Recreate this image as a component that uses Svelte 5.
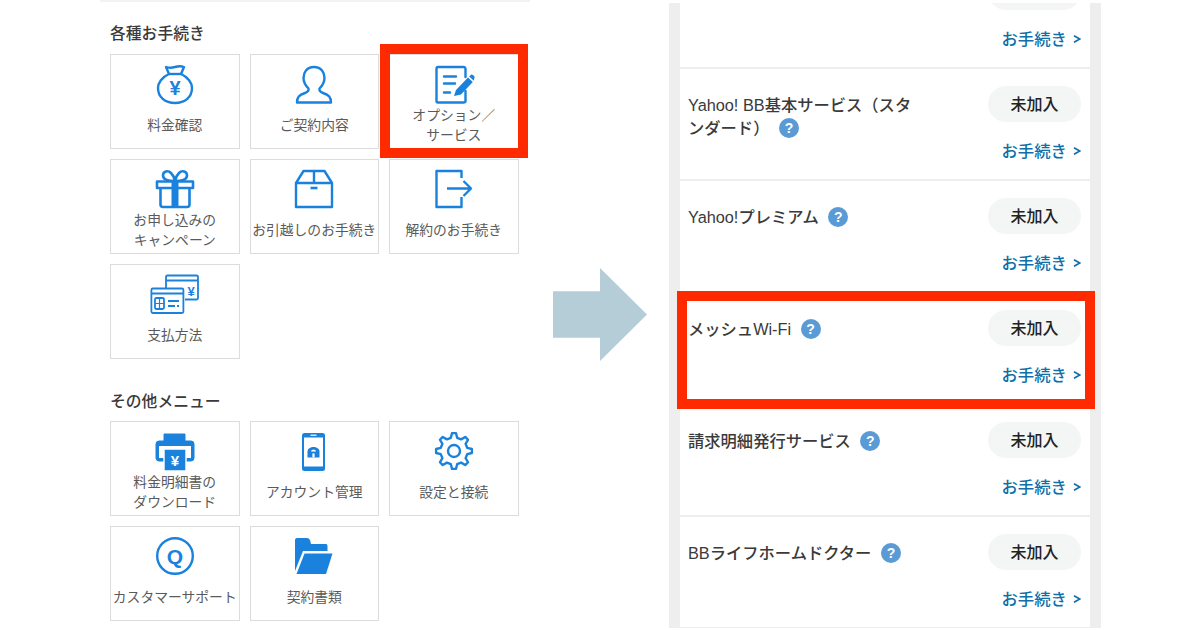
<script>
  const procedures = [
    { icon: 'bag', label: ['料金確認'] },
    { icon: 'user', label: ['ご契約内容'] },
    { icon: 'doc', label: ['オプション／', 'サービス'], marked: true },
    { icon: 'gift', label: ['お申し込みの', 'キャンペーン'] },
    { icon: 'box', label: ['お引越しのお手続き'] },
    { icon: 'exit', label: ['解約のお手続き'] },
    { icon: 'cards', label: ['支払方法'] }
  ]
  const others = [
    { icon: 'printer', label: ['料金明細書の', 'ダウンロード'] },
    { icon: 'phone', label: ['アカウント管理'] },
    { icon: 'gear', label: ['設定と接続'] },
    { icon: 'q', label: ['カスタマーサポート'] },
    { icon: 'folder', label: ['契約書類'] }
  ]
  const services = [
    { name: '' },
    { name: 'Yahoo! BB基本サービス（スタンダード）' },
    { name: 'Yahoo!プレミアム' },
    { name: 'メッシュWi-Fi', marked: true },
    { name: '請求明細発行サービス' },
    { name: 'BBライフホームドクター' }
  ]

  function gearPath() {
    const teeth = 8
    const pts = []
    for (let i = 0; i < teeth; i++) {
      const a = (i / teeth) * Math.PI * 2 - Math.PI / 2
      const step = (Math.PI * 2) / teeth
      const add = (r, o) => pts.push(`${(20 + r * Math.cos(a + o * step)).toFixed(2)} ${(20 + r * Math.sin(a + o * step)).toFixed(2)}`)
      add(13.6, -0.3)
      add(18, -0.14)
      add(18, 0.14)
      add(13.6, 0.3)
    }
    return 'M' + pts.join('L') + 'Z'
  }
</script>

{#snippet icon(name)}
  {#if name === 'bag'}
    <svg class="ico" viewBox="0 0 40 40" fill="none" stroke="currentColor" stroke-width="2.4" stroke-linejoin="round">
      <path d="M14 10 L11 3 Q15 4.5 20 3 Q25 1.5 29 3 L26 10 C33 13 37 19 37 24 C37 33 30 39 20 39 C10 39 3 33 3 24 C3 19 7 13 14 10Z"/>
      <path d="M14 10 H26"/>
      <text x="20" y="31" text-anchor="middle" class="glyph" font-size="20">¥</text>
    </svg>
  {:else if name === 'user'}
    <svg class="ico" viewBox="0 0 40 40" fill="none" stroke="currentColor" stroke-width="2.4" stroke-linejoin="round">
      <path d="M20 3 C12.5 3 9.5 8.5 9.5 14 C9.5 19 12 22 14.5 24.5 C15 27 14 28 11 29 C5 31 3 33 3 38.5 H37 C37 33 35 31 29 29 C26 28 25 27 25.5 24.5 C28 22 30.5 19 30.5 14 C30.5 8.5 27.5 3 20 3Z"/>
    </svg>
  {:else if name === 'doc'}
    <svg class="ico" viewBox="0 0 40 40" fill="none" stroke="currentColor" stroke-width="2.4" stroke-linecap="round" stroke-linejoin="round">
      <path d="M31.5 13 V5 Q31.5 3 29.5 3 H4 Q2.5 3 2.5 5 V37 Q2.5 38.5 4 38.5 H29.5 Q31.5 38.5 31.5 37 V27"/>
      <path d="M10 12.5 H22 M10 19.5 H21 M10 28.5 H16"/>
      <path d="M20 32 L22 26 L34 13.5 L38.8 18 L27 30.5Z M35.2 12.4 L37 10.8 Q38 10 39 11 L40.4 12.5 Q41 13.4 40.2 14.4 L39.8 16.8Z" fill="currentColor" stroke="none"/>
    </svg>
  {:else if name === 'gift'}
    <svg class="ico" viewBox="0 0 40 40" fill="none" stroke="currentColor" stroke-width="2.6" stroke-linejoin="round">
      <path d="M2 12.5 H38 V19 H2Z"/>
      <path d="M5.5 19 V35.5 Q5.5 38 8 38 H32 Q34.5 38 34.5 35.5 V19"/>
      <path d="M16.5 12 H23.5 V38 H16.5Z" fill="currentColor" stroke="none"/>
      <path d="M20 12 C14 12 8 11 8 6.5 C8 2 13 1 16 4 C18 6 19.5 9 20 12 C20.5 9 22 6 24 4 C27 1 32 2 32 6.5 C32 11 26 12 20 12Z"/>
    </svg>
  {:else if name === 'box'}
    <svg class="ico" viewBox="0 0 40 40" fill="none" stroke="currentColor" stroke-width="2.4" stroke-linejoin="round">
      <path d="M2 14 L9.5 2 H30.5 L38 14 V38 H2Z"/>
      <path d="M2 14 H38 M20 2 V14"/>
      <path d="M16.5 19 H23.5" stroke-width="2.6"/>
    </svg>
  {:else if name === 'exit'}
    <svg class="ico" viewBox="0 0 40 40" fill="none" stroke="currentColor" stroke-width="2.4" stroke-linejoin="round">
      <path d="M27.5 9 V2 H2.5 V38 H27.5 V28"/>
      <path d="M13 19.5 H37 M29.5 12 L37 19.5 L29.5 27"/>
    </svg>
  {:else if name === 'cards'}
    <svg class="ico wide" viewBox="-5 0 50 40" fill="none" stroke="currentColor" stroke-width="1.8" stroke-linejoin="round">
      <path d="M11 14 V3 Q11 1.5 12.5 1.5 H41.5 Q43 1.5 43 3 V24 Q43 25.5 41.5 25.5 H30"/>
      <path d="M11 6.5 H43" stroke-width="2"/>
      <text x="36" y="22" text-anchor="middle" class="glyph" font-size="13">¥</text>
      <rect x="-3.6" y="14.5" width="32" height="24.5" rx="1.5" fill="#fff"/>
      <path d="M-3.6 19.5 H28.4" stroke-width="2"/>
      <rect x="0" y="24" width="9" height="11" rx="1.5"/>
      <path d="M4.5 24 V35 M0 29.5 H9" stroke-width="1.2"/>
      <path d="M13 27 H24 M13 32 H20 M22 32 H24"/>
    </svg>
  {:else if name === 'printer'}
    <svg class="ico" viewBox="0 0 40 40" fill="none" stroke="currentColor" stroke-linejoin="round">
      <path d="M9 3 H30 V10 H9Z" fill="currentColor"/>
      <path d="M4 10 H36 Q39 10 39 13 V27 Q39 30 36 30 H4 Q1 30 1 27 V13 Q1 10 4 10Z" fill="currentColor"/>
      <rect x="4" y="15" width="32" height="12" fill="#fff" stroke="none"/>
      <rect x="9" y="18" width="22" height="22" fill="currentColor" stroke="#fff" stroke-width="1.4"/>
      <text x="20" y="35" text-anchor="middle" class="glyph white" font-size="15">¥</text>
    </svg>
  {:else if name === 'phone'}
    <svg class="ico" viewBox="0 0 40 40">
      <rect x="8" y="2" width="23" height="38" rx="2.5" fill="currentColor"/>
      <rect x="10" y="6.5" width="19" height="29" fill="#fff"/>
      <rect x="16.5" y="3.6" width="6" height="1.2" fill="#fff"/>
      <path d="M13.5 26.5 V20.5 C13.5 14.5 25.5 14.5 25.5 20.5 V26.5Z" fill="currentColor"/>
      <path d="M17 20.6 C17 18 22 18 22 20.6Z" fill="#fff"/>
      <rect x="18.4" y="22.4" width="2.2" height="4.1" fill="#fff"/>
    </svg>
  {:else if name === 'gear'}
    <svg class="ico" viewBox="0 0 40 40" fill="none" stroke="currentColor" stroke-width="2.4" stroke-linejoin="round">
      <path d={gearPath()}/>
      <circle cx="20" cy="20" r="6"/>
    </svg>
  {:else if name === 'q'}
    <svg class="ico" viewBox="0 0 40 40" fill="none" stroke="currentColor" stroke-width="2.4">
      <circle cx="20" cy="20" r="17.8"/>
      <text x="20" y="27.5" text-anchor="middle" class="glyph" font-size="21">Q</text>
    </svg>
  {:else if name === 'folder'}
    <svg class="ico" viewBox="0 0 40 40">
      <path d="M1 4 Q1 2 3 2 H13 Q15 2 16 4 L17 8 H32 Q33.5 8 33.5 10 V15 H9 L1 35Z" fill="currentColor"/>
      <path d="M10.5 17.5 H38.5 L32 38 H2.5Z" fill="currentColor"/>
    </svg>
  {/if}
{/snippet}

{#snippet tiles(items)}
  <div class="grid">
    {#each items as item}
      <div class="tile">
        {@render icon(item.icon)}
        <div class="tile-label">
          {#each item.label as line}
            <span>{line}</span>
          {/each}
        </div>
        {#if item.marked}<div class="frame"></div>{/if}
      </div>
    {/each}
  </div>
{/snippet}

<div class="page">
  <div class="menu">
    <div class="strip"></div>
    <h2 class="first">各種お手続き</h2>
    {@render tiles(procedures)}
    <h2 class="second">その他メニュー</h2>
    {@render tiles(others)}
  </div>

  <div class="arrow"></div>

  <div class="panel">
    <div class="list">
      {#each services as service}
        <div class="card">
          <div class="row">
            <div class="name">
              {service.name}
              {#if service.name}<span class="help">?</span>{/if}
            </div>
            <span class="pill">未加入</span>
          </div>
          <a class="link" href="#top">お手続き<svg class="chev" viewBox="0 0 8 8" fill="none" stroke="currentColor" stroke-width="1.8"><path d="M1 .8 L6.8 4 L1 7.2"/></svg></a>
          {#if service.marked}<div class="frame wide-frame"></div>{/if}
        </div>
      {/each}
    </div>
  </div>
</div>

<style>
  :global(body) {
    margin: 0;
    background: #fff;
    font-family: "Noto Sans CJK JP", "Noto Sans", sans-serif;
  }

  .page {
    display: flex;
    width: 1200px;
    height: 630px;
    overflow: hidden;
  }

  .menu {
    width: 430px;
    flex: none;
    margin-left: 100px;
  }

  .strip {
    height: 2px;
    background: #f2f2f2;
  }

  h2 {
    margin: 0;
    padding-left: 10px;
    font-size: 15.8px;
    font-weight: 500;
    line-height: 22px;
    color: #3a3a3a;
  }

  h2.first {
    margin-top: 20px;
    margin-bottom: 10px;
  }

  h2.second {
    margin-top: 31px;
    margin-bottom: 9px;
  }

  .grid {
    display: grid;
    grid-template-columns: repeat(3, 129.5px);
    grid-auto-rows: 95px;
    gap: 10px;
    margin-left: 10px;
  }

  .tile {
    position: relative;
    display: flex;
    flex-direction: column;
    align-items: center;
    box-sizing: border-box;
    border: 1px solid #dcdcdc;
    padding: 9px 0 5px;
    color: #1a82dc;
  }

  .ico {
    display: block;
    flex: none;
    width: 40px;
    height: 40px;
    overflow: visible;
  }

  .ico.wide {
    width: 50px;
  }

  .glyph {
    fill: currentColor;
    stroke: none;
    font-family: "Liberation Sans", sans-serif;
    font-weight: 700;
  }

  .glyph.white {
    fill: #fff;
  }

  .tile-label {
    flex: 1;
    display: flex;
    flex-direction: column;
    align-items: center;
    justify-content: center;
    font-size: 13.8px;
    line-height: 20px;
    color: #5a5a5a;
    white-space: nowrap;
  }

  .frame {
    position: absolute;
    inset: -11px -10px -9.5px -10px;
    border: 10px solid #ff2a00;
    z-index: 2;
    pointer-events: none;
  }

  .frame.wide-frame {
    inset: -2.5px -5px -6px -3.5px;
  }

  .arrow {
    flex: none;
    width: 94px;
    height: 93px;
    margin: 268px 22px 0 23px;
    background: #b5cdd7;
    clip-path: polygon(0 25%, 50% 25%, 50% 0, 100% 50%, 50% 100%, 50% 75%, 0 75%);
  }

  .panel {
    flex: none;
    box-sizing: border-box;
    width: 432px;
    height: 625px;
    margin-top: 3px;
    padding: 0 11px;
    background: #eeeeee;
    overflow: hidden;
  }

  .list {
    display: flex;
    flex-direction: column;
    gap: 2px;
    margin-top: -46px;
  }

  .card {
    position: relative;
    display: flex;
    flex-direction: column;
    box-sizing: border-box;
    height: 110px;
    padding: 17px 9px 0 8px;
    background: #fff;
  }

  .row {
    display: flex;
    align-items: flex-start;
    justify-content: space-between;
    height: 50px;
  }

  .name {
    width: 232px;
    margin-top: 8px;
    font-family: "Liberation Sans", "Noto Sans CJK JP", sans-serif;
    font-size: 16.3px;
    font-weight: 500;
    line-height: 23px;
    color: #3a3a3a;
  }

  .help {
    display: inline-block;
    width: 20px;
    height: 20px;
    margin-left: 5px;
    border-radius: 50%;
    background: #5b9bd5;
    color: #fff;
    font-family: "Liberation Sans", sans-serif;
    font-size: 14px;
    font-weight: 700;
    line-height: 20px;
    text-align: center;
    vertical-align: 1px;
  }

  .pill {
    flex: none;
    width: 93px;
    height: 36px;
    border-radius: 18px;
    background: #f4f5f5;
    color: #222;
    font-size: 16px;
    font-weight: 500;
    line-height: 35px;
    text-align: center;
  }

  .link {
    display: flex;
    align-items: center;
    justify-content: flex-end;
    gap: 6px;
    margin-top: 2px;
    color: #106fa8;
    font-size: 16.4px;
    font-weight: 500;
    line-height: 24px;
    text-decoration: none;
  }

  .chev {
    width: 8px;
    height: 8px;
    margin-top: 2px;
  }
</style>
